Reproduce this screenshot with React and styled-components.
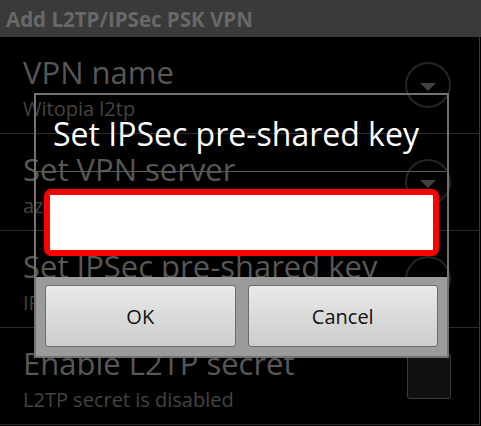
import React from 'react'
import styled, { createGlobalStyle } from 'styled-components'

const Global = createGlobalStyle`
    html, body {
        margin: 0;
        padding: 0;
        background: #000;
    }
    body {
        font-family: "Open Sans", "Noto Sans", sans-serif;
    }
`

const Screen = styled.div`
    position: relative;
    width: 481px;
    height: 426px;
    background: #000;
    overflow: hidden;
`

const TitleBar = styled.div`
    height: 37px;
    background: #3a3a3a;
    display: flex;
    align-items: center;
    padding-left: 6px;
    font-size: 20.5px;
    font-weight: 700;
    color: #686868;
`

const List = styled.div`
    display: flex;
    flex-direction: column;
    border-right: 1px solid #3a3a3a;
    margin-right: 1px;
`

const Row = styled.div`
    height: 96px;
    display: flex;
    align-items: center;
    padding: 0 28px 0 23px;
    border-bottom: 1px solid #2c2c2c;
`

const Texts = styled.div`
    flex: 1;
    display: flex;
    flex-direction: column;
    margin-top: 8px;
`

const RowTitle = styled.div`
    font-size: 31px;
    line-height: 36px;
    color: #575757;
    white-space: nowrap;
`

const RowSub = styled.div`
    font-size: 20px;
    line-height: 30px;
    margin-top: 4px;
    color: #434343;
    white-space: nowrap;
`

const Spinner = styled.div`
    width: 42px;
    height: 42px;
    border-radius: 50%;
    border: 2px solid #262626;
    display: flex;
    align-items: center;
    justify-content: center;
    flex-shrink: 0;
`

const Arrow = styled.div`
    width: 0;
    height: 0;
    border-left: 8px solid transparent;
    border-right: 8px solid transparent;
    border-top: 8px solid #404040;
    margin-top: 3px;
`

const Check = styled.div`
    width: 42px;
    height: 44px;
    border-radius: 3px;
    border: 1px solid #3c3c3c;
    background: #101010;
    flex-shrink: 0;
`

const Dialog = styled.div`
    position: absolute;
    left: 34px;
    top: 93px;
    width: 411px;
    height: 261px;
    border: 2px solid #727272;
    display: flex;
    flex-direction: column;
`

const DialogTitle = styled.div`
    height: 77px;
    display: flex;
    align-items: center;
    padding-left: 16px;
    font-size: 32px;
    color: #fff;
    border-bottom: 1px solid #5a5a5a;
    box-sizing: border-box;
    margin: 0 1px;
    white-space: nowrap;
`

const InputWrap = styled.div`
    flex: 1;
    padding: 17px 8px 0 8px;
`

const Input = styled.div`
    height: 55px;
    border: 6px solid #ff0000;
    border-radius: 7px;
    background: #fff;
`

const ButtonBar = styled.div`
    height: 79px;
    background: #9b9b9b;
    display: flex;
    gap: 12px;
    padding: 8px 9px 9px 9px;
    box-sizing: border-box;
`

const Button = styled.div`
    flex: 1;
    border-radius: 3px;
    background: linear-gradient(#e9e9e9, #cdcdcd);
    border: 1px solid #6c6c6c;
    display: flex;
    align-items: center;
    justify-content: center;
    font-size: 20px;
    color: #111;
`

const rows = [
    { title: 'VPN name', sub: 'Witopia l2tp', widget: 'spinner' },
    { title: 'Set VPN server', sub: 'az', widget: 'spinner' },
    { title: 'Set IPSec pre-shared key', sub: 'IPSec pre-shared key', widget: 'spinner' },
    { title: 'Enable L2TP secret', sub: 'L2TP secret is disabled', widget: 'check' },
]

const App = () => {
    return (
        <Screen>
            <Global />
            <TitleBar>Add L2TP/IPSec PSK VPN</TitleBar>
            <List>
                {rows.map((r, i) => (
                    <Row key={i}>
                        <Texts>
                            <RowTitle>{r.title}</RowTitle>
                            <RowSub>{r.sub}</RowSub>
                        </Texts>
                        {r.widget === 'spinner' ? (
                            <Spinner><Arrow /></Spinner>
                        ) : (
                            <Check />
                        )}
                    </Row>
                ))}
            </List>
            <Dialog>
                <DialogTitle>Set IPSec pre-shared key</DialogTitle>
                <InputWrap>
                    <Input />
                </InputWrap>
                <ButtonBar>
                    <Button>OK</Button>
                    <Button>Cancel</Button>
                </ButtonBar>
            </Dialog>
        </Screen>
    )
}

export default App
